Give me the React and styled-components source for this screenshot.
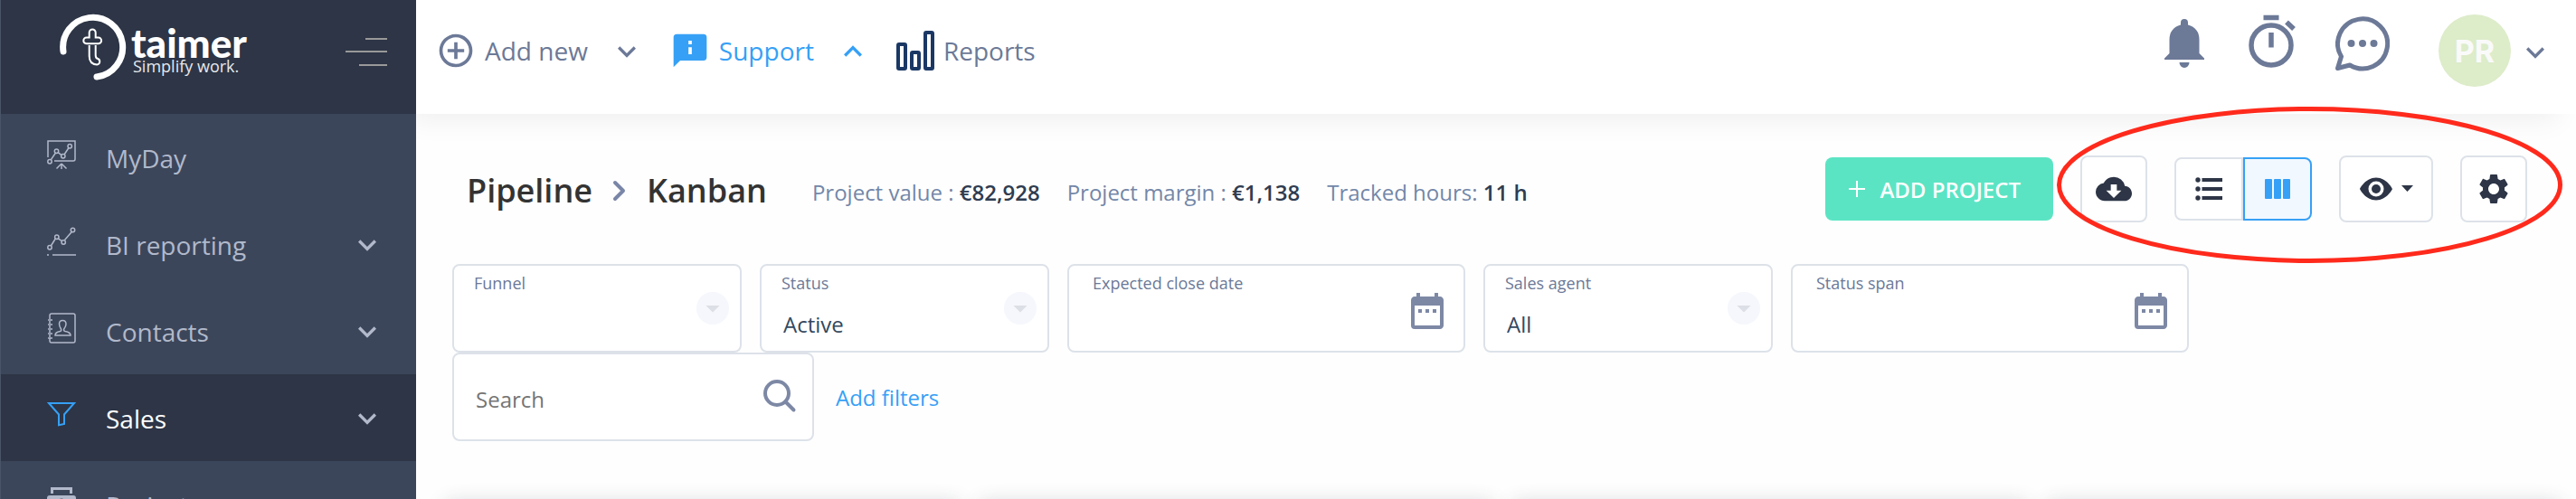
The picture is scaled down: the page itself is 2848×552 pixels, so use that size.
import React from 'react'
import styled, { createGlobalStyle } from "styled-components";
import { MdExpandMore, MdExpandLess, MdAddCircleOutline, MdDateRange, MdSettings, MdCloudDownload, MdArrowDropDown } from "react-icons/md";

const GlobalStyle=createGlobalStyle`
  *{
    box-sizing: border-box;
  }
  body{
    margin: 0;
    background: #fefefe;
    font-family: "Open Sans", "Noto Sans", sans-serif;
    overflow: hidden;
  }
  button,input,select{
    font-family: inherit;
    font-size: inherit;
    color: inherit;
  }
  button{
    margin: 0;
    padding: 0;
    border: 0;
    background: none;
    cursor: pointer;
  }
  a{
    text-decoration: none;
  }
  svg{
    display: block;
    flex-shrink: 0;
  }
`;

const Container=styled.div`
  position: relative;
  display: grid;
  grid-template-columns: 460px 1fr;
  height: 100vh;
  overflow: hidden;
`;

const SidebarWrap=styled.aside`
  z-index: 1;
  background: #3c465a;
  border-left: 1px solid #4a5468;
`;

const Brand=styled.div`
  display: flex;
  align-items: flex-start;
  justify-content: space-between;
  height: 126px;
  padding: 14px 32px 0 64px;
  background: #2d3546;
`;

const Logo=styled.a`
  display: flex;
  gap: 4px;
  color: #fff;
`;

const LogoText=styled.span`
  display: flex;
  flex-direction: column;
  padding-top: 14px;
`;

const LogoName=styled.span`
  font-family: Lato, sans-serif;
  font-size: 44px;
  font-weight: 900;
  line-height: 38px;
`;

const Slogan=styled.span`
  padding-left: 2px;
  font-size: 18px;
  line-height: 14px;
  color: #e6e8ec;
`;

const Burger=styled.button`
  padding-top: 28px;
`;

const Menu=styled.nav`
  display: flex;
  flex-direction: column;
`;

const MenuItem=styled.a`
  display: flex;
  align-items: center;
  height: 96px;
  padding: 2px 34px 0 50px;
  font-size: 28px;
  color: ${({active})=>active?"#fff":"#b1b9cb"};
  background: ${({active})=>active?"#2d3546":"transparent"};
  > svg:first-child{
    margin: 0 32px 8px 0;
    color: ${({active})=>active?"#36a0f6":"#b1b9cb"};
  }
  > svg:last-child{
    margin-left: auto;
    color: #b1b9cb;
  }
`;

const Main=styled.div`
  display: flex;
  flex-direction: column;
  min-width: 0;
`;

const Topbar=styled.header`
  display: flex;
  justify-content: space-between;
  height: 126px;
  padding: 0 25px 0 22px;
  background: #fff;
  box-shadow: -14px 14px 28px -6px rgba(0,0,0,0.06);
`;

const TopLinks=styled.div`
  display: flex;
  align-items: center;
  height: 112px;
`;

const TopLink=styled.button`
  display: flex;
  align-items: center;
  gap: 10px;
  margin-right: 28px;
  font-size: 28px;
  color: ${({active})=>active?"#36a0f6":"#6c7997"};
  > svg:last-child:not(:first-child){
    margin: 2px 0 0 13px;
  }
`;

const TopIcons=styled.div`
  display: flex;
  align-items: flex-start;
  padding-top: 16px;
  color: #6c7997;
`;

const IconButton=styled.button`
  margin-right: ${({gap})=>gap}px;
`;

const Profile=styled.button`
  display: flex;
  align-items: center;
  gap: 7px;
  color: #6c7997;
  > svg{
    margin-top: 4px;
  }
`;

const Avatar=styled.span`
  display: grid;
  place-items: center;
  width: 80px;
  height: 80px;
  border-radius: 50%;
  background: #ddecc9;
  color: #fafafa;
  font-family: Inter, sans-serif;
  font-size: 34px;
  font-weight: 700;
`;

const PageHead=styled.div`
  display: flex;
  align-items: center;
  padding: 46px 54px 0 56px;
`;

const Title=styled.h1`
  display: flex;
  align-items: center;
  gap: 22px;
  margin: 0 50px 0 0;
  padding-top: 4px;
  font-size: 36px;
  font-weight: 600;
  line-height: 48px;
  color: #333;
`;

const Stats=styled.div`
  display: flex;
  gap: 30px;
  padding-top: 8px;
  font-size: 24px;
  line-height: 32px;
  color: #7387a8;
  b{
    font-weight: 600;
    color: #2f3c50;
  }
`;

const Actions=styled.div`
  display: flex;
  align-items: center;
  gap: 30px;
  margin-left: auto;
  color: #2d3546;
`;

const AddProject=styled.button`
  display: flex;
  align-items: center;
  gap: 16px;
  height: 70px;
  padding: 0 36px 0 26px;
  border-radius: 8px;
  background: #5be4c4;
  color: #fff;
  font-size: 24px;
  font-weight: 600;
`;

const ToolButton=styled.button`
  display: flex;
  align-items: center;
  justify-content: center;
  width: ${({wide})=>wide?104:74}px;
  height: 74px;
  border: 2px solid #dde2e9;
  border-radius: 8px;
  background: #fff;
`;

const Toggle=styled.div`
  display: flex;
`;

const ToggleButton=styled.button`
  display: grid;
  place-items: center;
  width: 76px;
  height: 70px;
  border: 2px solid ${({active})=>active?"#36a0f6":"#dde2e9"};
  background: ${({active})=>active?"#f2f8ff":"#fff"};
  &:first-child{
    border-radius: 8px 0 0 8px;
  }
  &:last-child{
    border-radius: 0 8px 8px 0;
  }
`;

const Filters=styled.div`
  display: flex;
  flex-wrap: wrap;
  align-items: center;
  column-gap: 20px;
  padding: 46px 40px 0;
`;

const Field=styled.div`
  display: flex;
  align-items: center;
  justify-content: space-between;
  width: ${({width})=>width}px;
  height: 98px;
  padding: ${({date})=>date?"0 16px 0 26px":"0 12px 0 22px"};
  border: 2px solid #dde2e9;
  border-radius: 8px;
  background: #fff;
  color: #7d88a5;
`;

const FieldText=styled.div`
  display: flex;
  flex-direction: column;
  flex: 1;
  min-width: 0;
  align-self: stretch;
  padding-top: 6px;
  label{
    font-size: 18px;
    line-height: 26px;
    color: #6c7997;
  }
  select,input{
    width: 100%;
    height: 44px;
    margin-top: 10px;
    padding: 0 2px;
    border: 0;
    outline: 0;
    background: none;
    appearance: none;
    font-size: 24px;
    color: #34495e;
  }
`;

const CalendarIcon=styled(MdDateRange)`
  margin-top: 6px;
`;

const Arrow=styled.span`
  display: grid;
  place-items: center;
  width: 36px;
  height: 36px;
  border-radius: 50%;
  background: #f5f7fc;
  color: #dcdfe5;
`;

const SearchInput=styled.input`
  flex: 1;
  min-width: 0;
  height: 60px;
  padding: 4px 2px 0;
  border: 0;
  outline: 0;
  background: none;
  font-size: 24px;
  &::placeholder{
    color: #757575;
    opacity: 1;
  }
`;

const AddFilters=styled.a`
  padding-left: 4px;
  font-size: 24px;
  color: #36a0f6;
`;

const Board=styled.div`
  display: grid;
  grid-template-columns: repeat(4, 1fr);
  gap: 20px;
  padding: 68px 16px 0 32px;
`;

const Column=styled.section`
  height: 400px;
  border-radius: 8px;
  background: #fff;
  box-shadow: 0 0 22px rgba(45,53,70,0.2);
`;

const Highlight=styled.svg`
  position: absolute;
  top: 118px;
  right: 15px;
  z-index: 2;
  pointer-events: none;
`;

const LogoMark=()=>(
  <svg width="76" height="76" viewBox="0 0 76 76" fill="none" stroke="#fff">
    <path d="M5 43A33 33 0 1 1 42 71" strokeWidth="7" strokeLinecap="round"/>
    <path d="M33.700 27.500v-5.500a3.500 3.500 0 0 1 7 0v5.500h3a3 3 0 0 1 0 6.800h-13a3 3 0 0 1 0-6.800z" strokeWidth="2"/>
    <path d="M33.700 36v12q0 9 8.500 9.500a3.400 3.400 0 0 0 1-6.500q-2.500-.5-2.500-4V36" strokeWidth="2"/>
  </svg>
)

const menuIcons={
  board: (
    <svg width="34" height="34" viewBox="0 0 34 34" fill="none" stroke="currentColor" strokeWidth="1.500">
      <path d="M2 20V2h30v20q0 2-2 2H9M17 27v6M17 27l-5.500 5.500M17 27l5.500 5.500"/>
      <path d="M5.200 22.800 10.200 15.500M13.200 14.700 17 17.600M20 17 25 9.500"/>
      <circle cx="4" cy="24.700" r="2.200"/><circle cx="11.500" cy="13.300" r="2.200"/><circle cx="18.800" cy="18.700" r="2.200"/><circle cx="26.200" cy="7.700" r="2.200"/>
    </svg>
  ),
  chart: (
    <svg width="34" height="34" viewBox="0 0 34 34" fill="none" stroke="currentColor" strokeWidth="1.500">
      <path d="M5.300 22 10.300 14M13.300 13.800 17 16.400M20.500 15.500 28.500 6.300"/>
      <circle cx="4" cy="23.800" r="2.200"/><circle cx="11.800" cy="12.300" r="2.200"/><circle cx="19.200" cy="18" r="2.200"/><circle cx="29.500" cy="4.500" r="2.200"/>
      <path d="M1 32h2M7 32h26"/>
    </svg>
  ),
  contacts: (
    <svg width="34" height="34" viewBox="0 0 34 34" fill="none" stroke="currentColor" strokeWidth="1.500">
      <path d="M4 7V3q0-2 2-2h24q2 0 2 2v28q0 2-2 2H6q-2 0-2-2v-3M4 9v3M4 14v3M4 19v3M4 24v3M2 8h5M2 13h5M2 18h5M2 23h5M2 28h5"/>
      <path d="M10 25h17q0-3.500-6-4.500-2-.5-1.300-2.500 2.300-3 2.300-5.500 0-4-3.800-4t-3.700 4q0 2.500 2 5.500.7 2-1 2.500-5.500 1-5.500 4.500z"/>
    </svg>
  ),
  funnel: (
    <svg width="34" height="34" viewBox="0 0 34 34" fill="none" stroke="currentColor" strokeWidth="2">
      <path d="M3 4h28L20 16.500V27l-6 1.200V16.500z"/>
    </svg>
  ),
  case: (
    <svg width="34" height="34" viewBox="0 0 34 34" fill="currentColor">
      <path d="M5 8V1h24v7h-3V4H8v4zM4 10h26q3 0 3 3v21H1V13q0-3 3-3z"/>
      <circle cx="17" cy="18" r="3.500" fill="none" stroke="#3c465a" strokeWidth="2"/>
    </svg>
  ),
}

const InfoBubble=()=>(
  <svg width="44" height="44" viewBox="0 0 24 24" fill="currentColor">
    <path fillRule="evenodd" d="M4 2h16a2 2 0 0 1 2 2v12a2 2 0 0 1-2 2H6l-4 4V4a2 2 0 0 1 2-2zm7 4v2.200h2V6zm0 4v4.200h2V10z"/>
  </svg>
)

const ReportBars=()=>(
  <svg width="42" height="44" viewBox="0 0 42 44" fill="none" stroke="#1b3865" strokeWidth="4">
    <rect x="2" y="15" width="8" height="27" rx="1"/>
    <rect x="17" y="24" width="8" height="18" rx="1"/>
    <rect x="32" y="2" width="8" height="40" rx="1"/>
  </svg>
)

const Bell=()=>(
  <svg width="44" height="60" viewBox="0 0 44 60" fill="currentColor">
    <path d="M22 5a4 4 0 0 1 4 4v2.500Q38.500 15 38.500 28v15L44 48.500V50H0v-1.500L5.500 43V28Q5.500 15 18 11.500V9a4 4 0 0 1 4-4zM16.500 53h11a5.500 6 0 0 1-11 0z"/>
  </svg>
)

const Timer=()=>(
  <svg width="54" height="60" viewBox="0 0 54 60" fill="none" stroke="currentColor">
    <circle cx="25" cy="34" r="22" strokeWidth="5.500"/>
    <path d="M16.500 3.500h17M25 20v16.500M42 8.500l8 7.500" strokeWidth="5.500"/>
  </svg>
)

const Chat=()=>(
  <svg width="60" height="64" viewBox="0 0 60 64" fill="none" stroke="currentColor" strokeWidth="5">
    <path d="M2.500 59.500 6.500 46.500A27.500 27.500 0 1 1 16 56z" strokeLinejoin="round"/>
    <g fill="currentColor" stroke="none"><circle cx="17.500" cy="32" r="4"/><circle cx="30" cy="32" r="4"/><circle cx="42.500" cy="32" r="4"/></g>
  </svg>
)

const Eye=()=>(
  <svg width="38" height="28" viewBox="0 0 38 28" fill="currentColor">
    <path fillRule="evenodd" d="M19 1.500C31 1.500 37 14 37 14S31 26.500 19 26.500 1 14 1 14 7 1.500 19 1.500zm0 4a8.500 8.500 0 1 0 0 17 8.500 8.500 0 0 0 0-17z"/>
    <circle cx="19" cy="14" r="5"/>
  </svg>
)

const ListIcon=()=>(
  <svg width="30" height="26" viewBox="0 0 30 26" fill="currentColor">
    {[3,13,23].map((y)=><g key={y}><circle cx="3" cy={y} r="2.700"/><rect x="7.500" y={y-2} width="23" height="4"/></g>)}
  </svg>
)

const ColumnsIcon=()=>(
  <svg width="28" height="22" viewBox="0 0 28 22" fill="#36a0f6">
    <rect width="8" height="22" rx="1"/><rect x="10" width="8" height="22" rx="1"/><rect x="20" width="8" height="22" rx="1"/>
  </svg>
)

const SelectField=({id,label,value})=>(
  <Field width={320}>
    <FieldText>
      <label htmlFor={id}>{label}</label>
      <select id={id} defaultValue={value}>
        <option>{value}</option>
      </select>
    </FieldText>
    <Arrow><MdArrowDropDown size={36}/></Arrow>
  </Field>
)

const DateField=({id,label})=>(
  <Field width={440} date={1}>
    <FieldText>
      <label htmlFor={id}>{label}</label>
      <input id={id} type="text"/>
    </FieldText>
    <CalendarIcon size={48}/>
  </Field>
)

const menu=[
  {name:"MyDay",icon:"board"},
  {name:"BI reporting",icon:"chart",more:true},
  {name:"Contacts",icon:"contacts",more:true},
  {name:"Sales",icon:"funnel",more:true,active:true},
  {name:"Projects",icon:"case",more:true},
]

const Sidebar=()=>(
  <SidebarWrap>
    <Brand>
      <Logo href="#">
        <LogoMark/>
        <LogoText>
          <LogoName>taimer</LogoName>
          <Slogan>Simplify work.</Slogan>
        </LogoText>
      </Logo>
      <Burger aria-label="Toggle menu">
        <svg width="46" height="31" viewBox="0 0 46 31" fill="#999">
          <path d="M22 0h24v2H22zM0 14h46v2H0zM15 29h31v2H15z"/>
        </svg>
      </Burger>
    </Brand>
    <Menu>
      {menu.map(({name,icon,more,active})=>(
        <MenuItem href="#" key={name} active={active?1:undefined}>
          {menuIcons[icon]}
          <span>{name}</span>
          {more && <MdExpandMore size={40}/>}
        </MenuItem>
      ))}
    </Menu>
  </SidebarWrap>
)

const Header=()=>(
  <Topbar>
    <TopLinks>
      <TopLink><MdAddCircleOutline size={44}/>Add new<MdExpandMore size={40}/></TopLink>
      <TopLink active={1}><InfoBubble/>Support<MdExpandLess size={40}/></TopLink>
      <TopLink><ReportBars/>Reports</TopLink>
    </TopLinks>
    <TopIcons>
      <IconButton gap={49} aria-label="Notifications"><Bell/></IconButton>
      <IconButton gap={42} aria-label="Timer"><Timer/></IconButton>
      <IconButton gap={54} aria-label="Messages"><Chat/></IconButton>
      <Profile><Avatar>PR</Avatar><MdExpandMore size={40}/></Profile>
    </TopIcons>
  </Topbar>
)

export default function App() {
  return (
    <Container>
      <GlobalStyle/>
      <Sidebar/>
      <Main>
        <Header/>
        <PageHead>
          <Title>
            Pipeline
            <svg width="16" height="24" viewBox="0 0 16 24" fill="none" stroke="#7a86a8" strokeWidth="4" strokeLinecap="round" strokeLinejoin="round">
              <path d="M3 3l9 9-9 9"/>
            </svg>
            Kanban
          </Title>
          <Stats>
            <span>Project value : <b>€82,928</b></span>
            <span>Project margin : <b>€1,138</b></span>
            <span>Tracked hours: <b>11 h</b></span>
          </Stats>
          <Actions>
            <AddProject>
              <svg width="18" height="18" viewBox="0 0 18 18" stroke="#fff" strokeWidth="2"><path d="M9 0v18M0 9h18"/></svg>
              ADD PROJECT
            </AddProject>
            <ToolButton aria-label="Download"><MdCloudDownload size={40}/></ToolButton>
            <Toggle>
              <ToggleButton aria-label="List view"><ListIcon/></ToggleButton>
              <ToggleButton active={1} aria-label="Kanban view"><ColumnsIcon/></ToggleButton>
            </Toggle>
            <ToolButton wide={1} aria-label="Visibility">
              <Eye/>
              <svg width="22" height="8" viewBox="0 0 22 8" fill="currentColor"><path d="M9 0h13l-6.500 7z"/></svg>
            </ToolButton>
            <ToolButton aria-label="Settings"><MdSettings size={40}/></ToolButton>
          </Actions>
        </PageHead>
        <Filters>
          <SelectField id="funnel" label="Funnel" value=""/>
          <SelectField id="status" label="Status" value="Active"/>
          <DateField id="close" label="Expected close date"/>
          <SelectField id="agent" label="Sales agent" value="All"/>
          <DateField id="span" label="Status span"/>
          <Field width={400}>
            <SearchInput type="search" placeholder="Search" aria-label="Search"/>
            <svg width="44" height="44" viewBox="0 0 44 44" fill="none" stroke="currentColor" strokeWidth="4">
              <circle cx="17" cy="18" r="13"/>
              <path d="M26.500 27.500l9 9" strokeLinecap="round"/>
            </svg>
          </Field>
          <AddFilters href="#">Add filters</AddFilters>
        </Filters>
        <Board>
          <Column/>
          <Column/>
          <Column/>
          <Column/>
        </Board>
      </Main>
      <Highlight width="559" height="173" viewBox="0 0 559 173" fill="none" stroke="#ff2a1c" strokeWidth="5">
        <ellipse cx="279.500" cy="86.500" rx="277" ry="84"/>
      </Highlight>
    </Container>
  )
}
